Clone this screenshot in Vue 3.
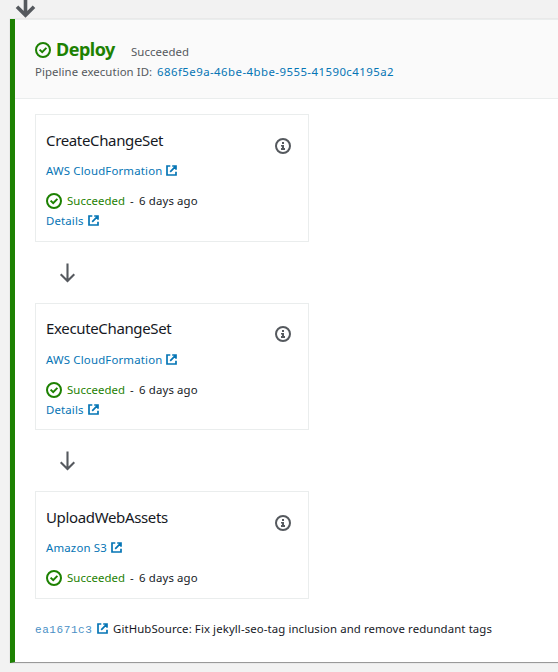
<script setup>
import { h } from 'vue'

const actions = [
  { name: 'CreateChangeSet', provider: 'AWS CloudFormation', details: true, key: 'create' },
  { name: 'ExecuteChangeSet', provider: 'AWS CloudFormation', details: true, key: 'execute' },
  { name: 'UploadWebAssets', provider: 'Amazon S3', details: false, key: 'upload' },
]

const stroke = { fill: 'none', stroke: 'currentColor' }

const CheckIcon = () =>
  h('svg', { viewBox: '0 0 16 16', ...stroke, 'stroke-width': 2 }, [
    h('circle', { cx: 8, cy: 8, r: 7 }),
    h('path', { d: 'M4.6 7.6l2.6 2.6 4.2-4.3' }),
  ])
const LinkIcon = () =>
  h('svg', { viewBox: '0 0 11 11', ...stroke, 'stroke-width': 1.7 }, [
    h('path', { d: 'M4.3 1H1v9h9V6.7M6.2 1H10v3.8M9.8 1.2L4.2 6.8' }),
  ])
const InfoIcon = () =>
  h('svg', { viewBox: '0 0 16 16', ...stroke, 'stroke-width': 2 }, [
    h('circle', { cx: 8, cy: 8, r: 7 }),
    h('path', { d: 'M7 4h2v2H7zM6 7h3v3h1v2H6v-2h1V8.5H6z', fill: 'currentColor', stroke: 'none' }),
  ])
const ArrowIcon = () =>
  h('svg', { viewBox: '0 0 16 20', ...stroke, 'stroke-width': 2.1 }, [
    h('path', { d: 'M8.5 0.5V18M1.7 11.3L8.5 18l6.8-6.7' }),
  ])
</script>

<template>
  <div class="page">
    <div class="lead">
      <svg class="lead-arrow" viewBox="0 0 22 19" fill="none" stroke="currentColor" stroke-width="3.6">
        <path d="M10.5 0v15.5M2 6.7l8.5 8.6L19 6.7" />
      </svg>
    </div>
    <section class="stage">
      <header class="head">
        <div class="title-row">
          <CheckIcon class="check" />
          <h2>Deploy</h2>
          <span class="state">Succeeded</span>
        </div>
        <div class="exec">
          <span class="exec-label">Pipeline execution ID:</span>
          <a class="exec-id">686f5e9a-46be-4bbe-9555-41590c4195a2</a>
        </div>
      </header>
      <div class="body">
        <template v-for="(a, i) in actions" :key="a.key">
          <div v-if="i" class="connector"><ArrowIcon class="arrow" /></div>
          <article class="card" :class="a.key">
            <div class="info-col">
              <h3>{{ a.name }}</h3>
              <a class="provider"><span>{{ a.provider }}</span><LinkIcon class="ext" /></a>
              <div class="status">
                <CheckIcon class="check" />
                <span class="ok">Succeeded</span>
                <span class="dash">-</span>
                <span class="ago">6 days ago</span>
              </div>
              <a v-if="a.details" class="details"><span>Details</span><LinkIcon class="ext" /></a>
            </div>
            <InfoIcon class="info" />
          </article>
        </template>
        <div class="commit">
          <a class="hash">ea1671c3</a>
          <LinkIcon class="ext" />
          <span class="message">GitHubSource: Fix jekyll-seo-tag inclusion and remove redundant tags</span>
        </div>
      </div>
    </section>
  </div>
</template>

<style>
body {
  background: #f2f2f2;
}
</style>

<style scoped>
.page {
  box-sizing: border-box;
  height: 672px;
  overflow: hidden;
  padding-left: 10px;
  background: #f2f2f2;
  color: #16191f;
  font: 11.4px/20px "Noto Sans", "Open Sans", sans-serif;
  letter-spacing: 0.14px;
  white-space: nowrap;
}
.lead {
  height: 19px;
  padding-left: 5px;
  color: #55595e;
}
.lead-arrow {
  display: block;
  width: 22px;
  height: 19px;
}
.stage {
  box-sizing: border-box;
  height: 644px;
  border-left: 5px solid #1d8102;
  border-bottom: 1px solid #999;
  background: #fff;
  box-shadow: 0 0 1px #bbb;
}
.head {
  box-sizing: border-box;
  height: 80px;
  padding: 18px 20px 0;
  border-top: 1px solid #eaeded;
  border-bottom: 1px solid #eaeded;
  background: #fafafa;
  color: #55595e;
}
.title-row {
  display: flex;
  align-items: center;
  height: 22px;
}
.check {
  flex: none;
  width: 16px;
  height: 16px;
  color: #1d8102;
}
.title-row .check {
  margin-top: 2px;
}
h2 {
  width: 75px;
  margin: 0 0 0 5px;
  color: #1d8102;
  font-size: 18px;
  line-height: 22px;
  font-weight: 700;
  letter-spacing: -0.5px;
}
.state {
  padding-top: 6px;
  letter-spacing: 0.05px;
}
.exec {
  display: flex;
  height: 20px;
  padding-top: 2px;
}
.exec-label {
  width: 122px;
  letter-spacing: 0.07px;
}
.exec-id {
  letter-spacing: 0.46px;
}
a,
.commit .ext {
  color: #0575b5;
}
.body {
  padding: 15px 20px 0;
}
.card {
  box-sizing: border-box;
  display: flex;
  justify-content: space-between;
  width: 274px;
  height: 128px;
  padding: 14px 17px 0 10px;
  border: 1px solid #eaeded;
}
.execute {
  height: 127px;
  padding-top: 13px;
}
.upload {
  height: 108px;
}
h3 {
  height: 32px;
  margin: 0;
  font-size: 15px;
  line-height: 22px;
  font-weight: 400;
  letter-spacing: -0.35px;
}
.execute h3 {
  height: 33px;
}
.provider,
.details {
  display: flex;
  height: 20px;
}
.provider {
  height: 30px;
  letter-spacing: 0.18px;
}
.ext {
  flex: none;
  width: 11px;
  height: 11px;
  margin: 3.5px 0 0 4px;
}
.status {
  display: flex;
  align-items: center;
  height: 20px;
}
.ok {
  width: 63px;
  margin-left: 5px;
  color: #1d8102;
  letter-spacing: 0.05px;
}
.dash {
  width: 9px;
}
.info {
  flex: none;
  width: 16px;
  height: 16px;
  margin: 9px 0 0;
  color: #55595e;
}
.connector {
  box-sizing: border-box;
  height: 61px;
  padding: 21px 0 0 24px;
}
.arrow {
  display: block;
  width: 16px;
  height: 20px;
  color: #55595e;
}
.commit {
  display: flex;
  height: 20px;
  margin-top: 20px;
}
.hash {
  width: 58px;
  padding-top: 1px;
  font-family: "Liberation Mono", monospace;
  font-size: 11px;
  letter-spacing: 0.58px;
  color: #4a8fc5;
}
.message {
  margin-left: 5px;
  letter-spacing: 0.105px;
}
</style>
